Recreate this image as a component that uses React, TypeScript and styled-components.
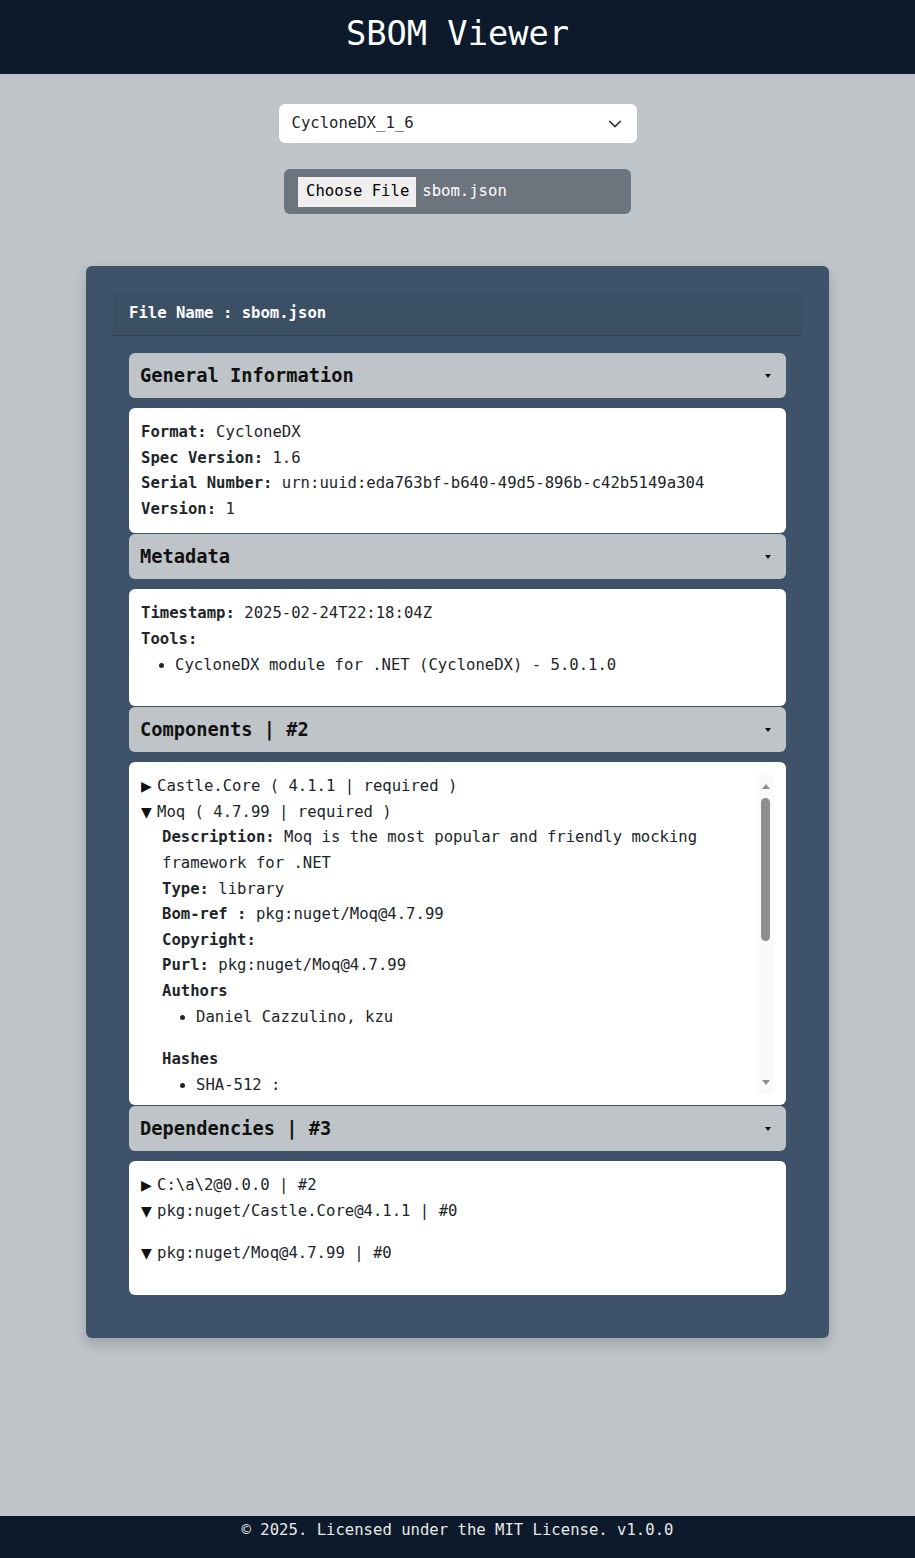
import React from "react";
import styled, { createGlobalStyle } from "styled-components";

const GlobalStyle = createGlobalStyle`
  html, body { margin: 0; padding: 0; }
  body {
    background: #bec4c8;
    font-family: "DejaVu Sans Mono", "Liberation Mono", monospace;
    font-size: 15.6px;
    line-height: 25.6px;
    color: #212529;
  }
  * { box-sizing: border-box; }
`;

const Page = styled.div`
  min-height: 100vh;
  display: flex;
  flex-direction: column;
`;

const Header = styled.header`
  height: 74px;
  background: #0c1a2b;
  display: flex;
  justify-content: center;
  padding-top: 14px;
`;

const Title = styled.h1`
  margin: 0;
  font-size: 33.7px;
  line-height: 40px;
  font-weight: 400;
  color: #ffffff;
`;

const Main = styled.main`
  flex: 1;
  display: flex;
  flex-direction: column;
  align-items: center;
  padding: 30px 0 40px;
`;

const SelectWrap = styled.div`
  position: relative;
  width: 358px;
`;

const Select = styled.select`
  appearance: none;
  -webkit-appearance: none;
  display: block;
  width: 100%;
  height: 39px;
  border: none;
  border-radius: 6px;
  background: #ffffff;
  font: inherit;
  color: #212529;
  padding: 0 40px 0 13px;
  outline: none;
`;

const Chevron = styled.svg`
  position: absolute;
  right: 15px;
  top: 13px;
  pointer-events: none;
`;

const FileBox = styled.div`
  margin-top: 26px;
  width: 347px;
  height: 45px;
  background: #6c757d;
  border-radius: 6px;
  display: flex;
  align-items: center;
  gap: 6px;
  padding: 0 14px;
`;

const FileButton = styled.button`
  height: 30px;
  background: #efefef;
  border: none;
  border-radius: 0;
  padding: 0 7px 0 8px;
  font: inherit;
  color: #000000;
  cursor: pointer;
`;

const FileName = styled.span`
  color: #ffffff;
`;

const Panel = styled.section`
  margin-top: 52px;
  width: 743px;
  background: #3e5369;
  border-radius: 6px;
  padding: 27px;
  box-shadow: 0 6px 14px rgba(0, 0, 0, 0.18);
`;

const CardHeader = styled.div`
  padding: 8px 16px;
  background: rgba(0, 0, 0, 0.03);
  border-bottom: 1px solid rgba(0, 0, 0, 0.175);
  color: #ffffff;
  font-weight: bold;
`;

const CardBody = styled.div`
  padding: 17px 16px 16px;
  display: flex;
  flex-direction: column;
  gap: 1px;
`;

const Section = styled.div`
  display: flex;
  flex-direction: column;
  gap: 9.5px;
`;

const Heading = styled.div`
  height: 45.5px;
  background: #bfc4c8;
  border-radius: 6px;
  display: flex;
  align-items: center;
  justify-content: space-between;
  padding: 1px 15px 0 11px;
  font-size: 18.7px;
  font-weight: bold;
  color: #111111;
  cursor: pointer;
`;

const Caret = styled.span`
  width: 0;
  height: 0;
  border-left: 3.5px solid transparent;
  border-right: 3.5px solid transparent;
  border-top: 4px solid #111111;
`;

const Body = styled.div`
  background: #ffffff;
  border-radius: 6px;
  padding: 12.5px 12px 10.5px;
`;

const Line = styled.div`
  margin: 0;
`;

const Label = styled.b`
  font-weight: bold;
`;

const List = styled.ul`
  margin: 0 0 17px;
  padding-left: 34px;
  li { overflow-wrap: break-word; }
`;

const ScrollFrame = styled.div`
  display: flex;
  height: 320px;
`;

const ScrollContent = styled.div`
  flex: 1;
  min-width: 0;
  overflow-y: auto;
  scrollbar-width: none;
  &::-webkit-scrollbar { display: none; }
`;

const ScrollTrack = styled.div`
  width: 17px;
  flex: none;
  background: #fafafa;
  display: flex;
  flex-direction: column;
  align-items: center;
  padding: 10px 0 9px;
`;

const Arrow = styled.span<{ $dir: "up" | "down" }>`
  width: 0;
  height: 0;
  border-left: 4.5px solid transparent;
  border-right: 4.5px solid transparent;
  ${(p) =>
    p.$dir === "up"
      ? "border-bottom: 5px solid #8f8f8f;"
      : "border-top: 5px solid #8f8f8f; margin-top: auto;"}
`;

const Thumb = styled.span`
  margin-top: 9px;
  width: 9px;
  height: 143px;
  border-radius: 4.5px;
  background: #8e8e8e;
`;

const Node = styled.details`
  margin: 0;
  &[open] > summary::before { content: "▼"; }
`;

const Summary = styled.summary`
  list-style: none;
  cursor: pointer;
  &::-webkit-details-marker { display: none; }
  &::before {
    content: "▶";
    display: inline-block;
    vertical-align: top;
    width: 16px;
    height: 25.6px;
    line-height: 25.6px;
    font-size: 14px;
    font-family: "DejaVu Sans", sans-serif;
    color: #111111;
  }
`;

const NodeBody = styled.div`
  padding-left: 21px;
`;

const EmptyList = styled.ul`
  margin: 0 0 17px;
  padding: 0;
`;

const Footer = styled.footer`
  height: 42px;
  padding-top: 2px;
  background: #0c1a2b;
  color: #e8e9e7;
  text-align: center;
`;

const SectionBlock: React.FC<{ title: string; children: React.ReactNode }> = ({ title, children }) => (
  <Section>
    <Heading>
      <span>{title}</span>
      <Caret />
    </Heading>
    <Body>{children}</Body>
  </Section>
);

const sha =
  "c8b1e7f35d0a9b42f6e1d3c7a58b9e2f01d46c3a7b8e9f2d5c1a0b3e4f6d7c8a9b0e1f2a3c4d5e6f7a8b9c0d1e2f3a4b5c6d7e8f9a0b1c2d3e4f5a6b7c8d9e0f1";

export default function App() {
  return (
    <Page>
      <GlobalStyle />
      <Header>
        <Title>SBOM Viewer</Title>
      </Header>
      <Main>
        <SelectWrap>
          <Select defaultValue="CycloneDX_1_6">
            <option value="CycloneDX_1_6">CycloneDX_1_6</option>
            <option value="CycloneDX_1_5">CycloneDX_1_5</option>
            <option value="SPDX_2_3">SPDX_2_3</option>
          </Select>
          <Chevron width="14" height="14" viewBox="0 0 16 16" fill="none">
            <path d="m2 5 6 6 6-6" stroke="#343a40" strokeWidth="1.8" strokeLinecap="round" strokeLinejoin="round" />
          </Chevron>
        </SelectWrap>
        <FileBox>
          <FileButton type="button">Choose File</FileButton>
          <FileName>sbom.json</FileName>
        </FileBox>

        <Panel>
          <CardHeader>File Name : sbom.json</CardHeader>
          <CardBody>
            <SectionBlock title="General Information">
              <Line><Label>Format:</Label> CycloneDX</Line>
              <Line><Label>Spec Version:</Label> 1.6</Line>
              <Line><Label>Serial Number:</Label> urn:uuid:eda763bf-b640-49d5-896b-c42b5149a304</Line>
              <Line><Label>Version:</Label> 1</Line>
            </SectionBlock>

            <SectionBlock title="Metadata">
              <Line><Label>Timestamp:</Label> 2025-02-24T22:18:04Z</Line>
              <Line><Label>Tools:</Label></Line>
              <List>
                <li>CycloneDX module for .NET (CycloneDX) - 5.0.1.0</li>
              </List>
            </SectionBlock>

            <SectionBlock title="Components | #2">
              <ScrollFrame>
                <ScrollContent>
                  <Node>
                    <Summary>Castle.Core ( 4.1.1 | required )</Summary>
                    <NodeBody>
                      <Line><Label>Type:</Label> library</Line>
                      <Line><Label>Bom-ref :</Label> pkg:nuget/Castle.Core@4.1.1</Line>
                    </NodeBody>
                  </Node>
                  <Node open>
                    <Summary>Moq ( 4.7.99 | required )</Summary>
                    <NodeBody>
                      <Line><Label>Description:</Label> Moq is the most popular and friendly mocking framework for .NET</Line>
                      <Line><Label>Type:</Label> library</Line>
                      <Line><Label>Bom-ref :</Label> pkg:nuget/Moq@4.7.99</Line>
                      <Line><Label>Copyright:</Label></Line>
                      <Line><Label>Purl:</Label> pkg:nuget/Moq@4.7.99</Line>
                      <Line><Label>Authors</Label></Line>
                      <List>
                        <li>Daniel Cazzulino, kzu</li>
                      </List>
                      <Line><Label>Hashes</Label></Line>
                      <List>
                        <li>SHA-512 : {sha}</li>
                      </List>
                      <Line><Label>Licenses</Label></Line>
                      <List>
                        <li>BSD-3-Clause</li>
                      </List>
                      <Line><Label>External References</Label></Line>
                      <List>
                        <li>website : https://github.com/moq/moq4</li>
                        <li>vcs : https://github.com/moq/moq4</li>
                      </List>
                    </NodeBody>
                  </Node>
                </ScrollContent>
                <ScrollTrack>
                  <Arrow $dir="up" />
                  <Thumb />
                  <Arrow $dir="down" />
                </ScrollTrack>
              </ScrollFrame>
            </SectionBlock>

            <SectionBlock title="Dependencies | #3">
              <Node>
                <Summary>{"C:\\a\\2@0.0.0 | #2"}</Summary>
                <NodeBody>
                  <List>
                    <li>pkg:nuget/Castle.Core@4.1.1</li>
                    <li>pkg:nuget/Moq@4.7.99</li>
                  </List>
                </NodeBody>
              </Node>
              <Node open>
                <Summary>pkg:nuget/Castle.Core@4.1.1 | #0</Summary>
                <EmptyList />
              </Node>
              <Node open>
                <Summary>pkg:nuget/Moq@4.7.99 | #0</Summary>
                <EmptyList />
              </Node>
            </SectionBlock>
          </CardBody>
        </Panel>
      </Main>
      <Footer>© 2025. Licensed under the MIT License. v1.0.0</Footer>
    </Page>
  );
}
